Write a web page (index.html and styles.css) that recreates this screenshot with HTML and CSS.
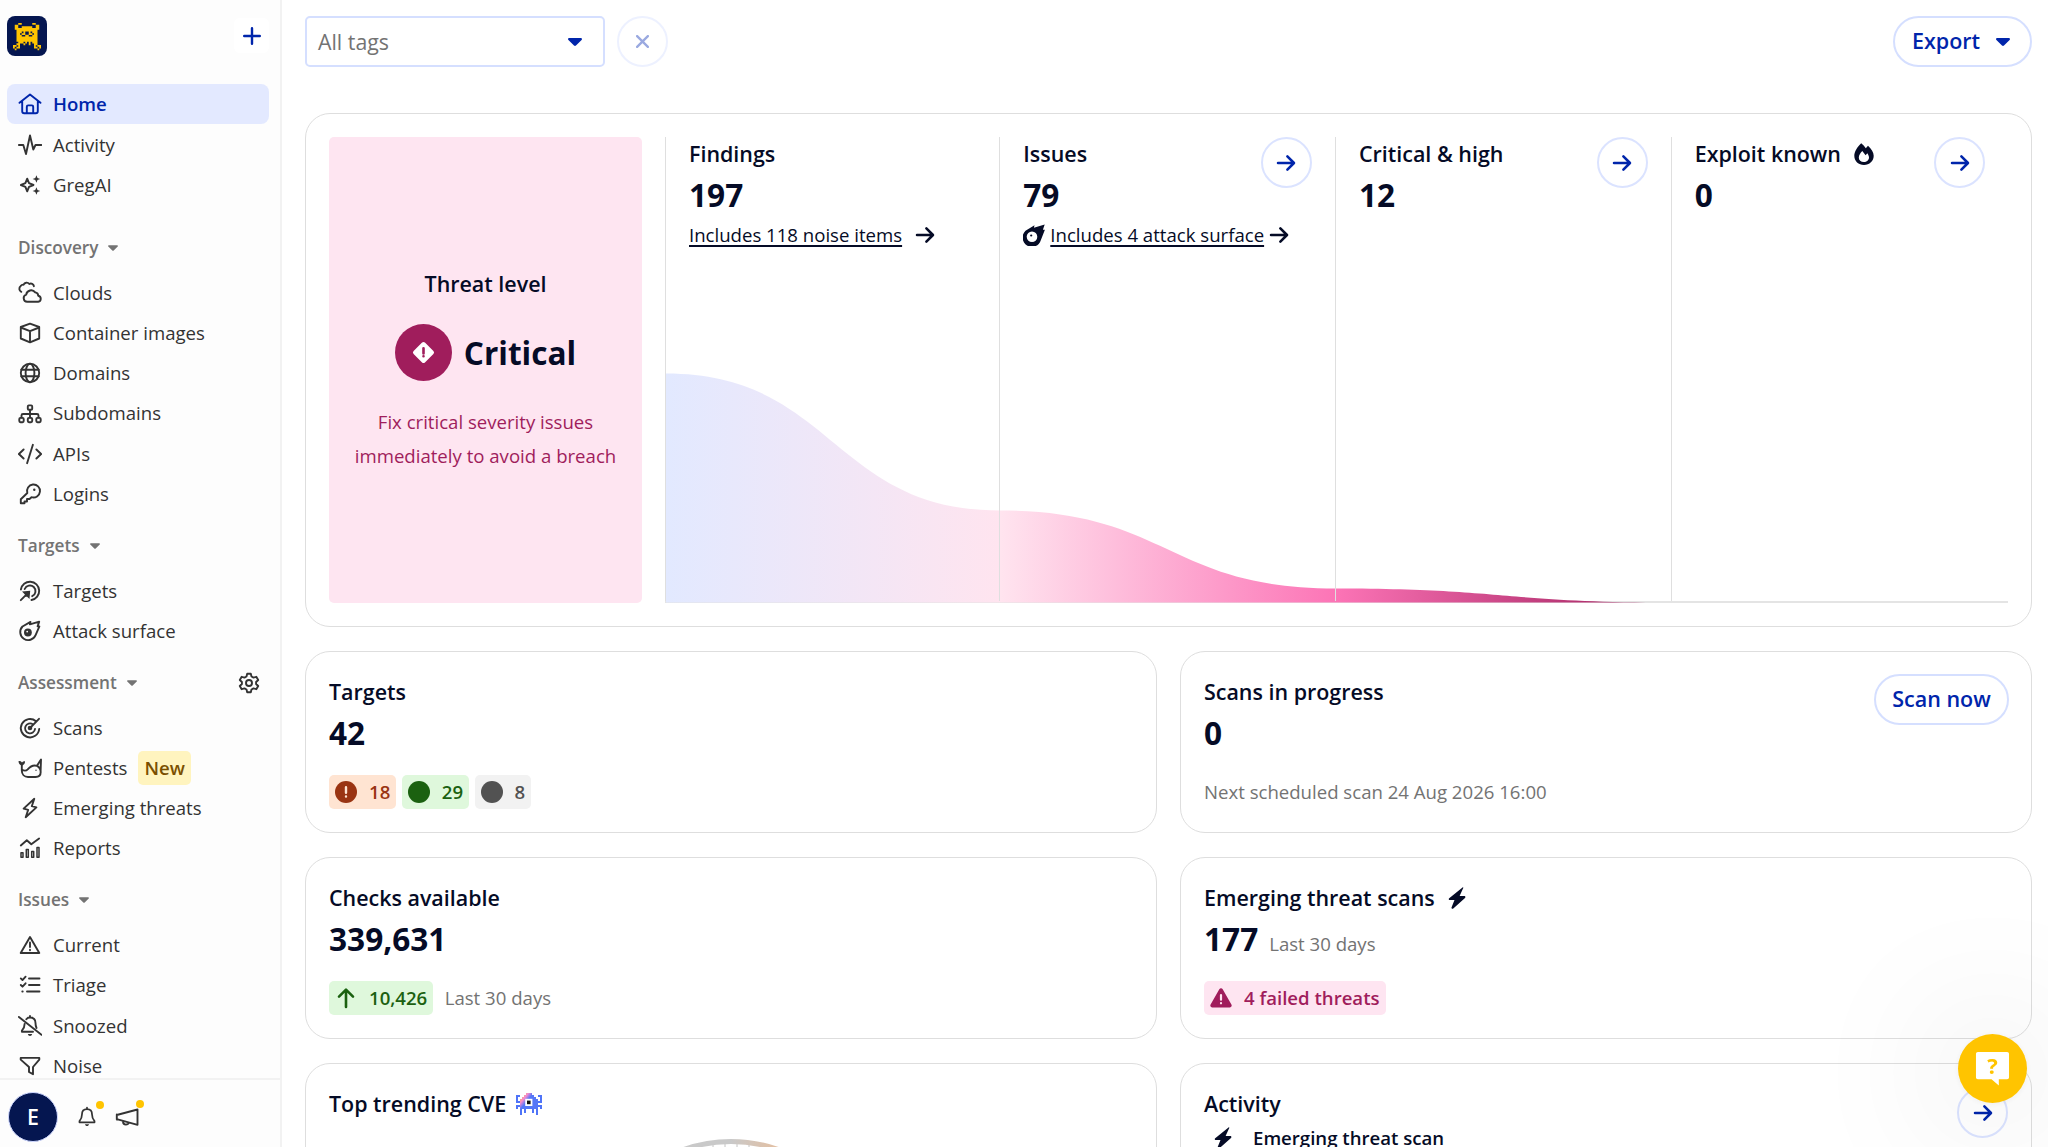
FILE: index.html
```html
<!DOCTYPE html>
<html lang="en">
<head>
<meta charset="utf-8">
<title>Home</title>
<link rel="stylesheet" href="styles.css">
</head>
<body>
<svg class="sprite" aria-hidden="true">
  <symbol id="home" viewBox="0 0 24 24"><path d="M1.5 10.8 12 2.6l10.500 8.200M4.200 9v10.200c0 1.200.8 2 2 2h11.600c1.200 0 2-.8 2-2V9M8.800 21v-6.300c0-.8.5-1.300 1.300-1.300h3.800c.8 0 1.300.5 1.300 1.300V21"/></symbol>
  <symbol id="pulse" viewBox="0 0 24 24"><path d="M.8 12h4.500L8 21l4-18.500 3.300 14L17.500 12h6"/></symbol>
  <symbol id="sparkle" viewBox="0 0 24 24"><path d="m9.200 5.700 1.800 4.500 4.500 1.800-4.500 1.800-1.800 4.500-1.800-4.500L2.900 12l4.500-1.800z"/><path class="fill" d="m18.400 2.200 1.100 2.700 2.700 1.100-2.700 1.100-1.100 2.700-1.100-2.700-2.700-1.100 2.700-1.100zM18.400 14.200l1.100 2.700 2.700 1.100-2.700 1.100-1.100 2.700-1.100-2.700-2.700-1.100 2.700-1.100z"/></symbol>
  <symbol id="clouds" viewBox="0 0 24 24"><path d="M3.300 10.800A3.400 3.400 0 0 1 2.700 5 3 3 0 0 1 5.600 3.700a3.300 3.300 0 0 1 5.700-.7 3 3 0 0 1 4.600 2.200M9.200 20.800a3.700 3.700 0 0 1-1-7.200 5 5 0 0 1 9-2.200 3.400 3.400 0 0 1 3 3.300 3.100 3.100 0 0 1 0 6.100z"/></symbol>
  <symbol id="cube" viewBox="0 0 24 24"><path d="M12 2.700 21.200 6v11.500L12 21.300 2.800 17.500V6zM2.800 6.500 12 10.200l9.200-3.700M12 10.200v11"/></symbol>
  <symbol id="globe" viewBox="0 0 24 24"><circle cx="12" cy="12" r="9.200"/><ellipse cx="12" cy="12" rx="4.400" ry="9.200"/><path d="M3.300 8.700h17.400M3.300 15.300h17.400"/></symbol>
  <symbol id="sitemap" viewBox="0 0 24 24"><rect x="9.800" y="3.400" width="4.400" height="4.400" rx="1"/><rect x="1.300" y="15.900" width="4.400" height="4.400" rx="1.200"/><rect x="9.800" y="15.900" width="4.400" height="4.400" rx="1.200"/><rect x="18.300" y="15.900" width="4.400" height="4.400" rx="1.200"/><path d="M12 8v7.500M3.500 15.500v-2c0-.9.600-1.500 1.500-1.500h14c.9 0 1.500.6 1.500 1.500v2"/></symbol>
  <symbol id="code" viewBox="0 0 24 24"><path d="M5.600 7.500.9 12l4.700 4.500M18.400 7.500l4.700 4.500-4.700 4.500M14.900 2.800 9.100 21.200"/></symbol>
  <symbol id="key" viewBox="0 0 24 24"><path d="M9.300 11a6.500 6.500 0 1 1 4.200 4.200L11.500 17H9v2.500H6.500v1.700H2.800v-4z"/><circle class="fill" cx="16.300" cy="7.700" r="1.200"/></symbol>
  <symbol id="aim" viewBox="0 0 24 24"><path d="M2.900 10.500A9.200 9.200 0 1 1 13.500 21M6.700 10a5.600 5.600 0 1 1 7.500 7.200M2.800 21.200l6-6"/><path class="fill" d="m4 12.500 8.200-.8-.7 8.300-2.400-2.200-2-.1-.2-2.300z"/></symbol>
  <symbol id="comet" viewBox="0 0 24 24"><path d="M4.500 7.500 12.500 2.900l-.6 2.500L21.200 2.700l-1.600 4.700h1.800L17.600 16.200A8 8 0 1 1 4.500 7.500z"/><circle class="fill" cx="9.900" cy="13.500" r="3.900"/><circle class="paper" cx="9.200" cy="12.600" r=".9"/></symbol>
  <symbol id="radar" viewBox="0 0 24 24"><path d="M18 5.200A9.200 9.200 0 1 0 21.200 13M14.800 8.200A5 5 0 1 0 17 13M12 12l9-9.200"/><circle class="fill" cx="12" cy="12" r="2.300"/></symbol>
  <symbol id="whale" viewBox="0 0 24 24"><path d="M3.800 8v6.500c0 3.800 2.500 6.500 6.200 6.500h7.500c3.200 0 5.200-2 5.200-5s-1.400-4.900-3.700-6.200c-4.200-1.300-6.800.6-9.300 3.600-2 2-3.700 1.500-5.900.1M19 9.700l4-6.200-.4 12"/><path class="fill" d="M.5 5.200c1.400-.3 2.600.2 3.500 1.200.8-1 1.800-1.400 3-1.200.2 2.300-1 3.800-3.200 4.500C1.700 9 .6 7.500.5 5.200z"/><circle class="fill" cx="18" cy="14.200" r=".7"/></symbol>
  <symbol id="bolt" viewBox="0 0 24 24"><path d="M16.300 2.800 5.600 12.600l4.600 1.200-2.500 7.400 10.700-9.800-4.600-1.200z"/></symbol>
  <symbol id="report" viewBox="0 0 24 24"><path d="m2.800 9.500 6-5.200 4.500 4 7.800-5.800"/><path class="thin" d="M3 16.700h2v4.500H3zM8.300 13.500h2v7.700h-2zM13.700 15.500h2v5.700h-2zM19 11.500h2v9.700h-2z"/></symbol>
  <symbol id="alert" viewBox="0 0 24 24"><path d="M12 4 21.300 20H2.700zM12 9.500v4.600M12 16.800v.4"/></symbol>
  <symbol id="list" viewBox="0 0 24 24"><path d="m2.800 5.400 1.700 1.700L7.600 3.700M2.800 12l1.700 1.700 3.100-3.400M11 5.500h10.500M11 12h10.500M9 18.500h12.500M4.300 18.500h.4"/></symbol>
  <symbol id="bell" viewBox="0 0 24 24"><path d="M12 1.800v1.600M12 3.400c-3.600 0-5.500 2.600-5.500 5.800 0 3.700-1.200 5.600-2.700 7.200v1.400h16.400v-1.400c-1.500-1.600-2.700-3.500-2.700-7.200 0-3.200-1.900-5.800-5.500-5.800z"/><path class="fill" d="M9.800 20h4.400c-.3 1.300-1.100 1.900-2.200 1.900S10.100 21.300 9.800 20z"/></symbol>
  <symbol id="snooze" viewBox="0 0 24 24"><path d="M.9 2.900 23.500 20.800M8.300 5.200C9.200 4 10.400 3.500 12 3.500c3.600 0 5.500 2.400 5.500 5.600 0 2 .4 3.600 1 4.900M6.600 10c0 3.300-1 5-2.700 6.700v1H15M12 2v1.500"/><path class="fill" d="M9.800 20h4.400c-.3 1.300-1.100 1.900-2.200 1.900S10.100 21.300 9.800 20z"/></symbol>
  <symbol id="funnel" viewBox="0 0 24 24"><path d="M2.700 3.900h18.600v1.700L15 13v7.200l-4-2.200v-5L2.700 5.600z"/></symbol>
  <symbol id="horn" viewBox="0 0 24 24"><path d="M1.800 9.500v5M1.800 10 22.500 4.500v15.300L1.800 14.200M8 16.200c0 2 1 3.400 2.900 3.400 1.600 0 2.600-.8 2.900-2.200"/></symbol>
  <symbol id="gear" viewBox="0 0 24 24"><circle cx="12" cy="12" r="3"/><path d="M10.200 2.700h3.600l.7 2.800 2 1.100 2.800-.8 1.900 3.200-2.100 2v2l2.100 2-1.900 3.200-2.800-.8-2 1.100-.7 2.800h-3.600l-.7-2.800-2-1.100-2.800.8L2.800 15l2.100-2v-2l-2.100-2 1.900-3.200 2.800.8 2-1.100z"/></symbol>
  <symbol id="arrow" viewBox="0 0 24 24"><path d="M3.300 12h17M13.500 4.800l7.200 7.200-7.200 7.200"/></symbol>
  <symbol id="caret" viewBox="0 0 14 8"><path class="fill" d="M1.200 0h11.600c1 0 1.500 1.200.8 1.900L8 7.500c-.6.6-1.400.6-2 0L.4 1.900C-.3 1.200.2 0 1.200 0z"/></symbol>
  <symbol id="boltfill" viewBox="0 0 18 22"><path class="fill" d="M14.500.4 1.200 11.200c-.9.7-.5 1.900.6 1.900h4.700L3.600 20.200c-.5 1.300.8 2 1.700 1.200L17 10.900c.8-.7.4-2-.8-2h-4.600l3.400-7.400C15.600.3 15-.1 14.500.4z"/></symbol>
</svg>

<div class="app">
  <aside class="sidebar">
    <header class="brand">
      <svg class="logo" viewBox="0 0 40 40"><rect width="40" height="40" rx="8" fill="#051650"/><path transform="translate(6 7) scale(1.75 1.7)" stroke="#ffc400" stroke-width="1.050" fill="none" d="M3 .5h2M11 .5h2M1 1.500h2M13 1.500h2M1 2.500h2M5 2.500h6M13 2.500h2M1 3.500h14M2 4.500h12M2 5.500h3M6 5.500h1M9 5.500h1M11 5.500h3M2 6.500h2M5 6.500h2M9 6.500h2M12 6.500h2M2 7.500h3M7 7.500h2M11 7.500h3M2 8.500h12M2 9.500h12M2 10.500h12M3 11.500h3M7 11.500h1M9 11.500h1M11 11.500h3M2 12.500h2M6 12.500h1M9 12.500h1M12 12.500h2M0 13.500h2M3 13.500h1M12 13.500h1M14 13.500h2M0 14.500h1M2 14.500h2M12 14.500h2M15 14.500h1M1 15.500h1M14 15.500h1"/></svg>
      <button class="add"><svg viewBox="0 0 18 18"><path d="M9 1.200v15.600M1.200 9h15.600"/></svg></button>
    </header>
    <nav class="nav">
      <a class="item active"><svg class="ic"><use href="#home"/></svg>Home</a>
      <a class="item"><svg class="ic"><use href="#pulse"/></svg>Activity</a>
      <a class="item"><svg class="ic"><use href="#sparkle"/></svg>GregAI</a>
      <h2 class="section first">Discovery<svg class="caret"><use href="#caret"/></svg></h2>
      <a class="item"><svg class="ic"><use href="#clouds"/></svg>Clouds</a>
      <a class="item"><svg class="ic"><use href="#cube"/></svg>Container images</a>
      <a class="item"><svg class="ic"><use href="#globe"/></svg>Domains</a>
      <a class="item"><svg class="ic"><use href="#sitemap"/></svg>Subdomains</a>
      <a class="item"><svg class="ic"><use href="#code"/></svg>APIs</a>
      <a class="item"><svg class="ic"><use href="#key"/></svg>Logins</a>
      <h2 class="section">Targets<svg class="caret"><use href="#caret"/></svg></h2>
      <a class="item"><svg class="ic"><use href="#aim"/></svg>Targets</a>
      <a class="item"><svg class="ic"><use href="#comet"/></svg>Attack surface</a>
      <h2 class="section">Assessment<svg class="caret"><use href="#caret"/></svg><svg class="ic gear"><use href="#gear"/></svg></h2>
      <a class="item"><svg class="ic"><use href="#radar"/></svg>Scans</a>
      <a class="item"><svg class="ic"><use href="#whale"/></svg>Pentests<span class="new">New</span></a>
      <a class="item"><svg class="ic"><use href="#bolt"/></svg>Emerging threats</a>
      <a class="item"><svg class="ic"><use href="#report"/></svg>Reports</a>
      <h2 class="section">Issues<svg class="caret"><use href="#caret"/></svg></h2>
      <a class="item"><svg class="ic"><use href="#alert"/></svg>Current</a>
      <a class="item"><svg class="ic"><use href="#list"/></svg>Triage</a>
      <a class="item"><svg class="ic"><use href="#snooze"/></svg>Snoozed</a>
      <a class="item"><svg class="ic"><use href="#funnel"/></svg>Noise</a>
    </nav>
    <footer class="account">
      <span class="avatar">E</span>
      <span class="notify"><svg class="ic small"><use href="#bell"/></svg><i class="dot"></i></span>
      <span class="notify"><svg class="ic"><use href="#horn"/></svg><i class="dot"></i></span>
    </footer>
  </aside>

  <main class="main">
    <div class="toolbar">
      <div class="select">All tags<svg class="caret"><use href="#caret"/></svg></div>
      <button class="round faded"><svg class="cross" viewBox="0 0 14 14"><path d="m1.200 1.200 11.600 11.600M12.800 1.200 1.200 12.800"/></svg></button>
      <button class="pill export">Export<svg class="caret"><use href="#caret"/></svg></button>
    </div>

    <section class="card overview">
      <div class="threat">
        <h3 class="title">Threat level</h3>
        <div class="level">
          <svg class="levelicon" viewBox="0 0 57 57"><circle cx="28.500" cy="28.500" r="28.500" fill="#a01d5c"/><rect x="20.500" y="20.500" width="16" height="16" rx="2" transform="rotate(45 28.500 28.500)" fill="#fff"/><path d="M28.500 24.200v5.300M28.500 32.200v.1" stroke="#a01d5c" stroke-width="2.600" stroke-linecap="round"/></svg>
          <span class="number">Critical</span>
        </div>
        <p class="advice">Fix critical severity issues immediately to avoid a breach</p>
      </div>
      <div class="funnel">
        <svg class="curve" viewBox="0 0 1343 466" preserveAspectRatio="none">
          <defs><linearGradient id="flow" gradientUnits="userSpaceOnUse" x1="0" x2="1005" y1="0" y2="0"><stop offset="0" stop-color="#e2e9ff"/><stop offset=".3333" stop-color="#ffe4ef"/><stop offset=".6666" stop-color="#fc74b6"/><stop offset="1" stop-color="#9c1c5a"/></linearGradient></defs>
          <path fill="url(#flow)" d="M0 236.500C167 236.500 167 373.500 334 373.500 502 373.500 502 451.500 670 451.500 838 451.500 838 465.500 1005 465.500H0z"/>
        </svg>
        <div class="stage">
          <h3 class="title">Findings</h3><span class="number">197</span>
          <span class="more wide"><a>Includes 118 noise items</a><svg class="ic arrow"><use href="#arrow"/></svg></span>
        </div>
        <div class="stage">
          <h3 class="title">Issues</h3><span class="number">79</span>
          <span class="more"><svg class="cometfill" viewBox="0 0 22 22"><path fill="#050b26" d="M2.500 6.800 11.500 1.300l-.6 2.500L21.700.4l-1.800 5.400h2L17.800 16.200A9.300 9.300 0 1 1 2.500 6.800z"/><circle cx="9" cy="12.700" r="5.300" fill="#fff"/><circle cx="8.200" cy="11.500" r="1.100" fill="#050b26"/></svg><a>Includes 4 attack surface</a><svg class="ic arrow"><use href="#arrow"/></svg></span>
          <button class="round go"><svg class="ic arrow"><use href="#arrow"/></svg></button>
        </div>
        <div class="stage">
          <h3 class="title">Critical &amp; high</h3><span class="number">12</span>
          <button class="round go"><svg class="ic arrow"><use href="#arrow"/></svg></button>
        </div>
        <div class="stage">
          <h3 class="title">Exploit known<svg class="flame" viewBox="0 0 20 22"><path fill="#050b26" d="M7.200.2C9 1.700 10.500 3.300 11.800 5.200l2.200-2.400C17.500 6 19.700 9.600 19.700 12.800 19.700 18 15.500 22 10 22S.3 18 .3 12.700C.3 8.800 3.200 4 7.200.2z"/><path fill="#fff" d="M9.800 19c-3 0-5-1.800-5-4.600 0-2.300 1.500-4.200 3.500-6.400l3.300 4.200 1.700-1.900c1 1.500 1.700 2.800 1.700 4.200 0 2.700-2.200 4.500-5.200 4.500z"/></svg></h3><span class="number">0</span>
          <button class="round go last"><svg class="ic arrow"><use href="#arrow"/></svg></button>
        </div>
      </div>
    </section>

    <div class="grid">
      <section class="card">
        <h3 class="title">Targets</h3><span class="number">42</span>
        <div class="tags">
          <span class="tag orange"><svg class="status" viewBox="0 0 22 22"><circle class="fill" cx="11" cy="11" r="11"/><path d="M11 6.300v5.400M11 15.400v.2" stroke="#ffe4d2" stroke-width="2.400" stroke-linecap="round"/></svg>18</span>
          <span class="tag green"><svg class="status" viewBox="0 0 22 22"><circle class="fill" cx="11" cy="11" r="11"/></svg>29</span>
          <span class="tag gray"><svg class="status" viewBox="0 0 22 22"><circle class="fill" cx="11" cy="11" r="11"/></svg>8</span>
        </div>
      </section>
      <section class="card">
        <h3 class="title">Scans in progress</h3><span class="number">0</span>
        <div class="tags"><span class="note">Next scheduled scan 24 Aug 2026 16:00</span></div>
        <button class="pill scan">Scan now</button>
      </section>
      <section class="card">
        <h3 class="title">Checks available</h3><span class="number">339,631</span>
        <div class="tags">
          <span class="tag green"><svg class="status up" viewBox="0 0 22 22"><path d="M11 20V3M4 9.700 11 2.700l7 7"/></svg>10,426</span>
          <span class="note after">Last 30 days</span>
        </div>
      </section>
      <section class="card">
        <h3 class="title">Emerging threat scans<svg class="boltfill"><use href="#boltfill"/></svg></h3>
        <span class="number">177<span class="note period">Last 30 days</span></span>
        <div class="tags">
          <span class="tag pink"><svg class="status" viewBox="0 0 22 22"><path class="fill" d="M9.300 2.200a2 2 0 0 1 3.400 0l8.700 15.200c.8 1.300-.1 3-1.700 3H2.300c-1.600 0-2.500-1.700-1.700-3z"/><path d="M11 8v4.700M11 16.200v.1" stroke="#ffe4f0" stroke-width="2.200" stroke-linecap="round"/></svg>4 failed threats</span>
        </div>
      </section>
      <section class="card tall">
        <h3 class="title">Top trending CVE<svg class="bug" viewBox="0 0 13 11"><defs><linearGradient id="bugfill" gradientUnits="userSpaceOnUse" x1="3" y1="1" x2="8" y2="5"><stop offset="0" stop-color="#ffb36b"/><stop offset=".3" stop-color="#f58ad0"/><stop offset=".6" stop-color="#5577f7"/></linearGradient></defs><path fill="url(#bugfill)" d="M5 0h3v1h1v1h1v1h1v5H2V3h1V2h1V1h1z"/><path stroke="#4f74f8" stroke-width="1.040" fill="none" d="M0 1.500h2M11 1.500h2M0 2.500h1M12 2.500h1M0 3.500h1M12 3.500h1M0 4.500h2M11 4.500h2M0 6.500h2M11 6.500h2M0 7.500h1M12 7.500h1M2 8.500h1M4 8.500h1M8 8.500h1M10 8.500h1M2 9.500h1M4 9.500h1M8 9.500h1M10 9.500h1M2 10.500h1M10 10.500h1"/><path fill="#fff" d="M4.600 2.900h3.600v3.600H4.600z"/><path fill="#111" d="M5.500 3.800h1.800v1.800H5.500z"/></svg></h3>
        <svg class="gauge" viewBox="0 0 290 290"><defs><linearGradient id="heat"><stop offset=".5" stop-color="#c9c9c9"/><stop offset=".7" stop-color="#e9bd99"/></linearGradient></defs><path d="M115 7v14M127 6v14M139 5v14M151 5v14M163 6v14M175 7v14" stroke="#c4c4c4"/><circle cx="145" cy="145" r="142.500" fill="none" stroke="url(#heat)" stroke-width="5"/></svg>
      </section>
      <section class="card tall">
        <h3 class="title">Activity</h3>
        <div class="event"><svg class="boltfill"><use href="#boltfill"/></svg>Emerging threat scan</div>
        <button class="round go"><svg class="ic arrow"><use href="#arrow"/></svg></button>
      </section>
    </div>
  </main>
</div>
<button class="help"><svg viewBox="0 0 36 36"><path fill="#fff" d="M3 1h30c1.200 0 2 .8 2 2v24c0 1.200-.8 2-2 2H24.500v6.500L17 29H3c-1.200 0-2-.8-2-2V3c0-1.200.8-2 2-2z"/></svg><span class="mark">?</span></button>
</body>
</html>
```
FILE: styles.css
```css
* { box-sizing: border-box; }
body { margin: 0; font: 18.6px/1.4 "Open Sans", sans-serif; color: #050b26; background: #fff; overflow: hidden; }
h2, h3, p { margin: 0; }
button { font: inherit; color: inherit; background: #fff; border: 0; padding: 0; }
svg { display: block; flex: none; }
.sprite { position: absolute; width: 0; height: 0; }

.app { display: flex; height: 1147px; overflow: hidden; }
.sidebar { width: 282px; flex: none; display: flex; flex-direction: column; background: #fdfdfd; border-right: 2px solid #f2f2f2; color: #333; }
.brand { display: flex; justify-content: space-between; align-items: center; height: 84.4px; padding: 0 11px 13.4px 7px; }
.logo { width: 40px; height: 40px; }
.add { width: 35px; height: 35px; border-radius: 6px; display: grid; place-items: center; color: #0025ab; }
.add svg { width: 18px; height: 18px; stroke: currentColor; stroke-width: 2.4; stroke-linecap: round; }
.nav { flex: 1; min-height: 0; overflow: hidden; padding: 0 11px 0 7px; }
.item { display: flex; align-items: center; height: 40.1px; padding-left: 11px; gap: 11px; border-radius: 8px; }
.item.active { background: #e3e9ff; color: #0025ab; font-weight: 600; }
.ic { width: 24px; height: 24px; fill: none; stroke: currentColor; stroke-width: 1.9; stroke-linecap: round; stroke-linejoin: round; }
.fill { fill: currentColor; stroke: none; }
.paper { fill: #fdfdfd; stroke: none; }
.thin { stroke-width: 1.5; }
.section { display: flex; align-items: center; height: 57px; padding: 7px 8px 0 11px; font-size: 17.2px; font-weight: 600; color: #737373; }
.section.first { height: 68.500px; padding-top: 19px; }
.section .caret { width: 10px; height: 6px; margin-left: 10px; }
.gear { margin-left: auto; color: #333; }
.new { padding: 0 6px; line-height: 34px; border-radius: 5px; background: #fff4bf; color: #7a4f00; font-weight: 600; }
.account { height: 69px; border-top: 2px solid #f2f2f2; display: flex; align-items: center; padding: 6px 0 0 8px; }
.avatar { width: 50px; height: 50px; border-radius: 50%; background: #051650; border: 1px solid #cfd8ff; color: #fff; font-size: 21.33px; font-weight: 600; display: grid; place-items: center; margin-right: 17px; }
.notify { position: relative; margin-right: 16px; width: 24px; }
.ic.small { width: 22px; height: 22px; margin-left: 1px; }
.dot { position: absolute; left: 20.5px; top: -5px; width: 8.5px; height: 8.5px; border-radius: 50%; background: #ffc400; }

.main { flex: 1; min-width: 0; padding: 16px 16px 0 23px; }
.toolbar { display: flex; gap: 12px; height: 51px; margin-bottom: 46px; font-size: 21.33px; }
.select { width: 300px; display: flex; align-items: center; justify-content: space-between; border: 2px solid #d5dfff; border-radius: 5px; padding: 0 21px 0 11px; color: #737373; }
.caret { width: 14px; height: 8px; }
.select .caret, .pill { color: #0025ab; }
.round { width: 51px; height: 51px; border-radius: 50%; border: 2px solid #dbe3ff; display: grid; place-items: center; color: #0025ab; }
.faded { border-color: #edf1ff; color: #9aa9e0; }
.cross { width: 13px; height: 13px; stroke: currentColor; stroke-width: 2.5; stroke-linecap: round; }
.pill { display: flex; align-items: center; justify-content: center; height: 51px; border: 2px solid #d5dfff; border-radius: 26px; font-size: 21.5px; font-weight: 600; }
.export { width: 139px; gap: 16px; margin-left: auto; padding-right: 3px; }

.card { position: relative; border: 1px solid #dedede; border-radius: 25px; padding: 23px; height: 182px; background: #fff; }
.title { display: flex; align-items: center; font-size: 21.45px; font-weight: 600; line-height: 34px; }
.number { display: block; font-size: 31.6px; font-weight: 700; line-height: 47px; height: 48px; }
.overview { height: 514px; display: flex; gap: 23px; }
.threat { width: 313px; border-radius: 5px; background: #fee5f1; display: flex; flex-direction: column; align-items: center; justify-content: center; }
.level { display: flex; align-items: center; gap: 12px; margin: 23px 0 24px; }
.levelicon { width: 57px; height: 57px; }
.advice { width: 280px; text-align: center; line-height: 34px; color: #a01d5c; }
.funnel { flex: 1; position: relative; display: grid; grid-template-columns: 334.3px 335.7px 335.7px 1fr; border-bottom: 2px solid #e4e4e4; }
.curve { position: absolute; left: 1px; top: 0; width: 1343px; height: 466px; }
.stage { position: relative; border-left: 1px solid #dfdfdf; padding-left: 23px; }
.more { display: flex; align-items: center; gap: 5px; height: 32px; }
.more.wide { gap: 12px; }
.more a { text-decoration: underline; text-decoration-thickness: 1.5px; text-underline-offset: 3px; }
.cometfill { width: 22px; height: 22px; }
.arrow { width: 22px; height: 22px; stroke-width: 2.8; }
.more:not(.wide) .arrow { margin-left: -1px; }
.go { position: absolute; right: 23px; top: 0; }
.flame { width: 20px; height: 22px; margin-left: 13px; }

.grid { display: grid; grid-template-columns: 852px 852px; gap: 24px 23px; margin-top: 24px; }
.tags { display: flex; align-items: center; gap: 5.5px; height: 34px; margin-top: 18px; }
.tag { display: flex; align-items: center; gap: 12px; height: 34px; padding: 0 6px; border-radius: 5px; font-weight: 600; }
.status { width: 22px; height: 22px; }
.up { fill: none; stroke: currentColor; stroke-width: 2.6; stroke-linecap: round; stroke-linejoin: round; }
.orange { background: #ffe4d2; color: #9a3412; }
.green { background: #dff8dc; color: #1b6110; }
.gray { background: #f2f2f2; color: #525252; }
.pink { background: #fee5f1; color: #a01d5c; }
.note { color: #737373; font-size: 18.6px; font-weight: 400; }
.after { margin-left: 6px; }
.period { margin-left: 11px; }
.scan { position: absolute; right: 22px; top: 22px; width: 135px; }
.boltfill { width: 18px; height: 22px; margin-left: 13px; }
.tall { height: 480px; }
.tall .go { right: 23px; top: 23px; }
.bug { width: 26px; height: 22px; margin-left: 10px; }
.gauge { width: 290px; height: 290px; margin: 18px auto 0; }
.event { display: flex; align-items: center; gap: 21px; line-height: 34px; font-weight: 600; }
.event .boltfill { margin-left: 10px; }

.help { position: fixed; right: 21px; bottom: 44px; width: 69px; height: 69px; border-radius: 50%; background: #ffc400; display: grid; place-items: center; box-shadow: 0 1px 7px rgba(0,0,0,.06), 0 4px 150px 20px rgba(0,0,0,.1); }
.help svg { width: 35px; height: 35px; grid-area: 1 / 1; }
.mark { grid-area: 1 / 1; color: #ffc400; font-size: 22px; font-weight: 700; line-height: 30px; padding-bottom: 7px; }
```
